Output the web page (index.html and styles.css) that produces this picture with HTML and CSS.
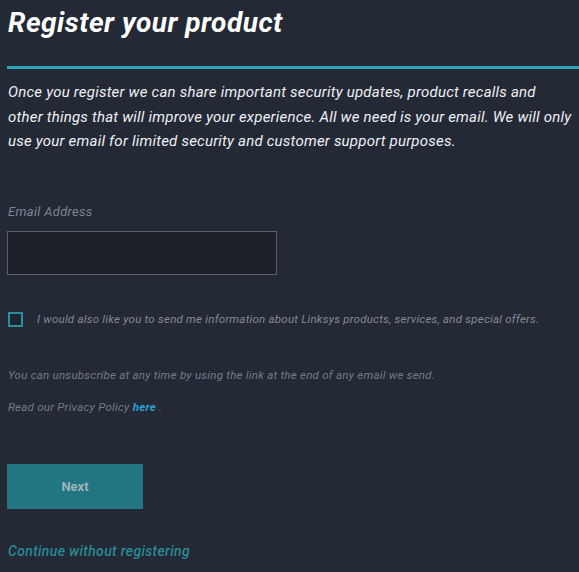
FILE: index.html
```html
<!DOCTYPE html>
<html lang="en">
<head>
    <meta charset="UTF-8">
    <meta name="viewport" content="width=device-width, initial-scale=1.0">
    <title>Register your product</title>
    <link rel="stylesheet" href="styles.css">
</head>
<body>
    <div class="register">
        <h1>Register your product</h1>
        <p class="intro">Once you register we can share important security updates, product recalls and<br>
            other things that will improve your experience. All we need is your email. We will only<br>
            use your email for limited security and customer support purposes.</p>

        <form id="registerForm">
            <label for="email" class="field-label">Email Address</label>
            <input type="email" id="email" name="email">

            <label class="optin">
                <input type="checkbox" name="optin">
                <span class="box"></span>
                <span>I would also like you to send me information about Linksys products, services, and special offers.</span>
            </label>

            <p class="note">You can unsubscribe at any time by using the link at the end of any email we send.</p>
            <p class="note">Read our Privacy Policy <a href="#">here</a> .</p>

            <button type="submit">Next</button>
        </form>

        <a href="#" class="skip">Continue without registering</a>
    </div>
</body>
</html>
```

FILE: styles.css
```css
body {
    font-family: 'Roboto', 'Liberation Sans', sans-serif;
    margin: 0;
    padding: 0;
    background: #232935;
    color: #fff;
}
.register {
    padding: 0 0 0 8px;
}
.register h1 {
    margin: 0 0 0 -1px;
    padding: 8px 0 0 1px;
    height: 58px;
    font-size: 28px;
    font-weight: 700;
    font-style: italic;
    letter-spacing: 0.5px;
    line-height: 30px;
    color: #fff;
    border-bottom: 3px solid #2aa3bb;
}
.intro {
    margin: 11px 0 0;
    font-size: 15px;
    font-style: italic;
    letter-spacing: 0.22px;
    line-height: 24.5px;
    white-space: nowrap;
    color: #eef0f3;
}
.field-label {
    display: block;
    margin: 50px 0 12px;
    font-size: 13px;
    font-style: italic;
    letter-spacing: 0.3px;
    color: #7d8692;
}
#email {
    display: block;
    box-sizing: border-box;
    width: 270px;
    height: 44px;
    margin: 1px 0 0 -1px;
    background: #1c212a;
    border: 1px solid #59626c;
    border-radius: 0;
    outline: none;
    color: #fff;
}
.optin {
    display: flex;
    align-items: center;
    gap: 14px;
    margin-top: 37px;
    font-size: 11.5px;
    font-style: italic;
    letter-spacing: 0.23px;
    color: #838b97;
}
.optin input {
    display: none;
}
.optin .box {
    flex: none;
    box-sizing: border-box;
    width: 15px;
    height: 15px;
    border: 2px solid #2b8f9c;
    background: #1f2530;
}
.note {
    margin: 0;
    font-size: 11.5px;
    font-style: italic;
    letter-spacing: 0.25px;
    color: #737c88;
}
.optin + .note {
    margin-top: 41px;
}
.note + .note {
    margin-top: 18px;
}
.note a {
    color: #2aa0d4;
    font-weight: 700;
    text-decoration: none;
}
button {
    display: block;
    width: 136px;
    height: 45px;
    margin: 50px 0 0 -1px;
    background: #217682;
    border: none;
    border-radius: 0;
    color: #9fb4b9;
    font-family: inherit;
    font-size: 13px;
    font-weight: 700;
    cursor: pointer;
}
.skip {
    display: inline-block;
    margin-top: 34px;
    font-size: 14px;
    font-style: italic;
    font-weight: 500;
    letter-spacing: 0.35px;
    color: #2a8996;
    text-decoration: none;
}
```
